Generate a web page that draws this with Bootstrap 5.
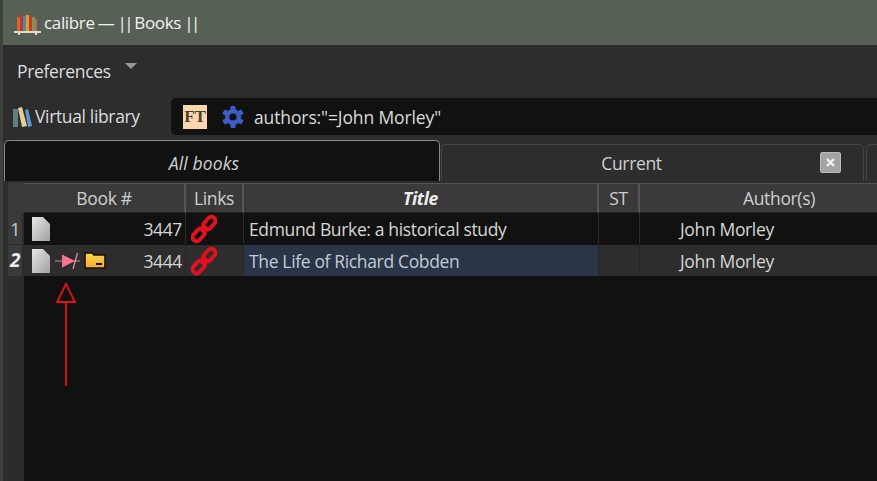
<!DOCTYPE html>
<html lang="en"><head><meta charset="utf-8"><title>calibre</title>
<link href="https://cdn.jsdelivr.net/npm/bootstrap@5.3.0/dist/css/bootstrap.min.css" rel="stylesheet">
<style>
html,body{height:481px;overflow:hidden}
body{background:#2d2d2d;color:#dcdcdc;font:17.5px/24px "Open Sans",sans-serif;width:877px;position:relative;letter-spacing:-.35px}
.win{height:481px;border-left:3px solid #3c413c;display:flex;flex-direction:column}
.ttl{height:45px;background:#566055;color:#f2f2f2;padding-left:10px;gap:1px;flex:none;font-size:17px;word-spacing:-1px}
.brs{letter-spacing:-2.4px}
.tools{height:38px;padding-left:14px;gap:14px;flex:none}
.caret-d{width:0;height:0;border:6px solid transparent;border-top:6px solid #999;border-bottom:0;margin-bottom:14px}
.srow{height:37px;padding-left:9px;flex:none;margin-top:15px;margin-bottom:5px}
.vl{width:159px;flex:none;gap:2px}
.vl span{margin-top:-2px}
.sbox{background:#111;height:37px;flex:1;border-radius:5px 0 0 5px;padding-left:12px;gap:15px;margin-right:-1px;letter-spacing:-.12px}
.sbox span{margin-left:-5px}
.ft{width:24px;height:24px;background:#fcd7ae;color:#4a4034;font:bold 17px/24px "Liberation Serif",serif;text-align:center;letter-spacing:0}
.tabs{height:41px;flex:none;display:flex;align-items:flex-end;padding-left:1px}
.tb{height:37px;text-align:center;line-height:36px;color:#cfcfcf;background:#2d2d2d;border:1px solid #444;border-bottom:0;border-radius:5px 5px 0 0;position:relative}
.tb.on{width:436px;height:41px;line-height:44px;background:#111;border-color:#8a8a8a;font-style:italic;padding-right:36px;letter-spacing:.15px}
.tb.cur{width:423px;margin-left:1px;padding-right:42px}
.tb.rest{flex:1;margin-left:2px;margin-right:-8px}
.xb{width:21px;height:21px;background:#a3a3a3;border:1px solid #bbb;border-radius:2px;position:absolute;right:22px;top:7px}
.xb svg{display:block;margin:4px}
.grid{flex:1;display:flex;min-height:0;margin-left:5px;margin-top:2px;background:#111}
.rh{width:16px;flex:none;background:#2b2b2b;display:flex;flex-direction:column}
.rh div{height:31px;margin-bottom:1px;margin-right:2px;background:#3a3a3a;text-align:center;line-height:31px;color:#bcc8d6;font-size:18.5px}
.rh .h{height:30px;margin-right:0;background:#3a3a3a;margin-bottom:0}
.rh .b{font-weight:bold;font-style:italic;color:#f0f0f0;font-size:19px}
.tw{flex:1;min-width:0;overflow:hidden}
table.bt{table-layout:fixed;width:896px;margin:0;border-collapse:separate;border-spacing:0;color:#d6d6d6;--bs-table-bg:transparent;--bs-table-color:#d6d6d6}
.bt th{height:30px;background:#3a3a3a;font-weight:normal;text-align:center;padding:0;border:0;border-top:1px solid #555;border-right:2px solid #555;border-bottom:1px solid #222;color:#cfcfcf;line-height:28px}
.bt th.ti{font-weight:bold;font-style:italic;color:#eee}
.bt td{height:32px;padding:0 5px;border:0;border-right:1px solid #2c2c2c;border-bottom:1px solid #111;vertical-align:middle;background:#111;color:#d6d6d6;line-height:24px;white-space:nowrap}
.bt tr.alt td{background:#2d2d2d;border-right-color:#262626}
.bt tr.alt td.sel{background:#2a3547;color:#c3cbd6}
.bnum{gap:5px;padding-left:3px}
.bnum .n{margin-left:auto;margin-right:-2px}
.auth{padding-left:40px!important}
.arrow{position:absolute;left:50px;top:280px}
</style></head><body>
<div class="win">
<div class="ttl d-flex align-items-center">
<svg width="30" height="26" viewBox="0 0 30 26"><rect x="4" y="7" width="3" height="14" fill="#d9632c"/><rect x="7" y="5" width="3" height="16" fill="#c9342c"/><rect x="10" y="6" width="3" height="15" fill="#3f8fb0"/><rect x="13" y="5" width="3" height="16" fill="#d9a02a"/><rect x="16" y="6" width="3" height="15" fill="#c9342c"/><rect x="19" y="7" width="3" height="14" fill="#7a9a4a"/><rect x="22" y="9" width="2" height="12" fill="#b26a7a"/><rect x="1" y="21" width="27" height="2" fill="#e6dcc8"/><rect x="5" y="23" width="2" height="2" fill="#e6dcc8"/><rect x="22" y="23" width="2" height="2" fill="#e6dcc8"/></svg>
<span>calibre — <span class="brs">||</span> Books <span class="brs">||</span></span></div>
<div class="tools d-flex align-items-end"><span>Preferences</span><span class="caret-d"></span></div>
<div class="srow d-flex align-items-center">
<div class="vl d-flex align-items-center"><svg width="21" height="22" viewBox="0 0 21 22"><path d="M1 3h5v18H1z" fill="#5f7f86"/><path d="M6 2l4-1 5 19-5 1z" fill="#e4cf8c"/><path d="M13 4l3-1 4 17-4 1z" fill="#5f93d6"/></svg><span>Virtual library</span></div>
<div class="sbox d-flex align-items-center"><div class="ft">FT</div>
<svg width="22" height="22" viewBox="0 0 22 22"><g fill="#3f5cc4"><circle cx="11" cy="11" r="8"/><rect x="8.5" y="0" width="5" height="22" rx="1"/><rect x="8.5" y="0" width="5" height="22" rx="1" transform="rotate(60 11 11)"/><rect x="8.5" y="0" width="5" height="22" rx="1" transform="rotate(120 11 11)"/></g><circle cx="11" cy="11" r="3.6" fill="#111"/></svg>
<span>authors:"=John Morley"</span></div></div>
<div class="tabs"><div class="tb on">All books</div><div class="tb cur">Current<span class="xb"><svg width="11" height="11" viewBox="0 0 11 11"><path d="M2 2l7 7M9 2l-7 7" stroke="#f4f4f4" stroke-width="2.2"/></svg></span></div><div class="tb rest"></div></div>
<div class="grid">
<div class="rh"><div class="h"></div><div>1</div><div class="b">2</div></div>
<div class="tw"><table class="table bt">
<colgroup><col style="width:162px"><col style="width:58px"><col style="width:355px"><col style="width:41px"><col></colgroup>
<thead><tr><th>Book #</th><th>Links</th><th class="ti">Title</th><th>ST</th><th>Author(s)</th></tr></thead>
<tbody>
<tr><td><div class="bnum d-flex align-items-center"><svg width="18" height="24" viewBox="0 0 18 24"><defs><linearGradient id="g" x1="0" y1="0" x2="1" y2="1"><stop offset="0" stop-color="#e8e8e8"/><stop offset="1" stop-color="#a0a0a0"/></linearGradient></defs><path d="M0 0h11l7 7v17H0z" fill="url(#g)"/></svg><span class="n">3447</span></div></td>
<td><svg width="26" height="30" viewBox="0 0 26 30" class="d-block"><g fill="none" stroke="#e3101e" stroke-width="4" transform="rotate(-48 13 15)"><rect x="-2" y="11" width="14" height="8" rx="3.5"/><rect x="14" y="11" width="14" height="8" rx="3.5"/><path d="M9 15h8"/></g></svg></td>
<td>Edmund Burke: a historical study</td><td></td><td class="auth">John Morley</td></tr>
<tr class="alt"><td><div class="bnum d-flex align-items-center"><svg width="18" height="24" viewBox="0 0 18 24"><path d="M0 0h11l7 7v17H0z" fill="url(#g)"/></svg>
<svg width="26" height="20" viewBox="0 0 26 20"><path d="M0 10h25" stroke="#d98a94" stroke-width="1"/><path d="M7 3.5l13 6.5-13 6.5z" fill="#f4748c"/><path d="M18 18L22.5 2" stroke="#e09aa4" stroke-width="1.2" fill="none"/></svg>
<svg width="22" height="17" viewBox="0 0 22 17" style="margin-left:-2px"><defs><linearGradient id="f" x1="0" y1="0" x2="0" y2="1"><stop offset="0" stop-color="#fcd64f"/><stop offset="1" stop-color="#f5a833"/></linearGradient></defs><path d="M1 1h7l2 2h11v13H1z" fill="url(#f)" stroke="#1a1206" stroke-width="1.6"/><path d="M12 12h6" stroke="#1a1206" stroke-width="2"/></svg>
<span class="n">3444</span></div></td>
<td><svg width="26" height="30" viewBox="0 0 26 30" class="d-block"><g fill="none" stroke="#e3101e" stroke-width="4" transform="rotate(-48 13 15)"><rect x="-2" y="11" width="14" height="8" rx="3.5"/><rect x="14" y="11" width="14" height="8" rx="3.5"/><path d="M9 15h8"/></g></svg></td>
<td class="sel">The Life of Richard Cobden</td><td></td><td class="auth">John Morley</td></tr>
</tbody></table></div></div>
</div>
<svg class="arrow" width="32" height="110" viewBox="0 0 32 110"><path d="M16 106V22M16 4L7 22H25Z" fill="none" stroke="#e5101a" stroke-width="1.8"/></svg>
</body></html>
